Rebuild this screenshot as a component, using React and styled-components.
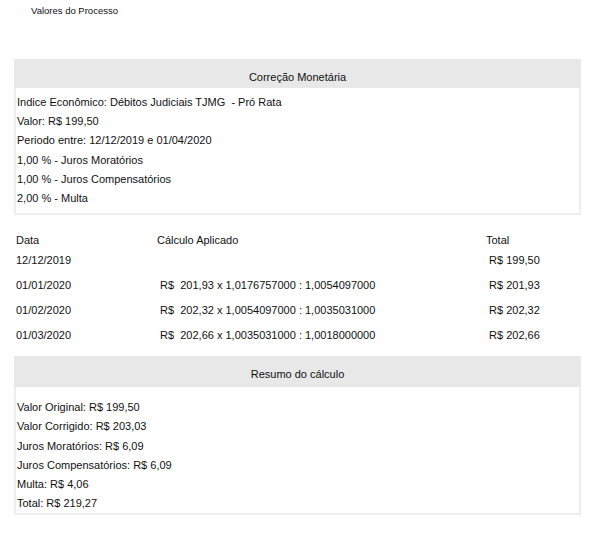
import React from "react";
import styled, { createGlobalStyle } from "styled-components";

const Global = createGlobalStyle`
  html, body { margin: 0; padding: 0; background: #fff; }
  body { font-family: "Liberation Sans", Arial, sans-serif; color: #111; }
`;

const Page = styled.div`
  width: 567px;
  padding: 5px 26px 0 14px;
  display: flex;
  flex-direction: column;
`;

const Title = styled.div`
  font-size: 9.5px;
  line-height: 12px;
  padding-left: 17px;
`;

const Panel = styled.section`
  margin-top: ${(p) => p.$mt}px;
  border: 2px solid #eeeeee;
  border-top: 0;
  display: flex;
  flex-direction: column;
`;

const PanelHeader = styled.div`
  box-sizing: border-box;
  height: ${(p) => p.$h}px;
  margin: 0 -2px;
  background: #e8e8e8;
  font-size: 11px;
  line-height: 13px;
  padding-top: 12px;
  text-align: center;
`;

const PanelBody = styled.div`
  padding: ${(p) => p.$pt}px 1px ${(p) => p.$pb}px;
  display: flex;
  flex-direction: column;
`;

const Line = styled.div`
  font-size: 11px;
  line-height: 19.2px;
  white-space: pre;
`;

const Table = styled.div`
  margin-top: 15px;
  padding-left: 2px;
  display: flex;
  flex-direction: column;
`;

const Row = styled.div`
  display: grid;
  grid-template-columns: 141px 329px 1fr;
  height: ${(p) => p.$h}px;
  align-items: start;
`;

const Cell = styled.div`
  font-size: 11px;
  line-height: 20px;
  white-space: pre;
`;

const rows = [
  ["12/12/2019", "", " R$ 199,50"],
  ["01/01/2020", " R$  201,93 x 1,0176757000 : 1,0054097000", " R$ 201,93"],
  ["01/02/2020", " R$  202,32 x 1,0054097000 : 1,0035031000", " R$ 202,32"],
  ["01/03/2020", " R$  202,66 x 1,0035031000 : 1,0018000000", " R$ 202,66"],
];

export default function App() {
  return (
    <>
      <Global />
      <Page>
        <Title>Valores do Processo</Title>
        <Panel $mt={42}>
          <PanelHeader $h={29}>Correção Monetária</PanelHeader>
          <PanelBody $pt={5} $pb={5}>
            <Line>Indice Econômico: Débitos Judiciais TJMG  - Pró Rata</Line>
            <Line>Valor: R$ 199,50</Line>
            <Line>Periodo entre: 12/12/2019 e 01/04/2020</Line>
            <Line>1,00 % - Juros Moratórios</Line>
            <Line>1,00 % - Juros Compensatórios</Line>
            <Line>2,00 % - Multa</Line>
          </PanelBody>
        </Panel>
        <Table>
          <Row $h={20}>
            <Cell>Data</Cell>
            <Cell>Cálculo Aplicado</Cell>
            <Cell>Total</Cell>
          </Row>
          {rows.map((r) => (
            <Row key={r[0]} $h={25}>
              <Cell>{r[0]}</Cell>
              <Cell>{r[1]}</Cell>
              <Cell>{r[2]}</Cell>
            </Row>
          ))}
        </Table>
        <Panel $mt={6}>
          <PanelHeader $h={31}>Resumo do cálculo</PanelHeader>
          <PanelBody $pt={11} $pb={0}>
            <Line>Valor Original: R$ 199,50</Line>
            <Line>Valor Corrigido: R$ 203,03</Line>
            <Line>Juros Moratórios: R$ 6,09</Line>
            <Line>Juros Compensatórios: R$ 6,09</Line>
            <Line>Multa: R$ 4,06</Line>
            <Line>Total: R$ 219,27</Line>
          </PanelBody>
        </Panel>
      </Page>
    </>
  );
}
